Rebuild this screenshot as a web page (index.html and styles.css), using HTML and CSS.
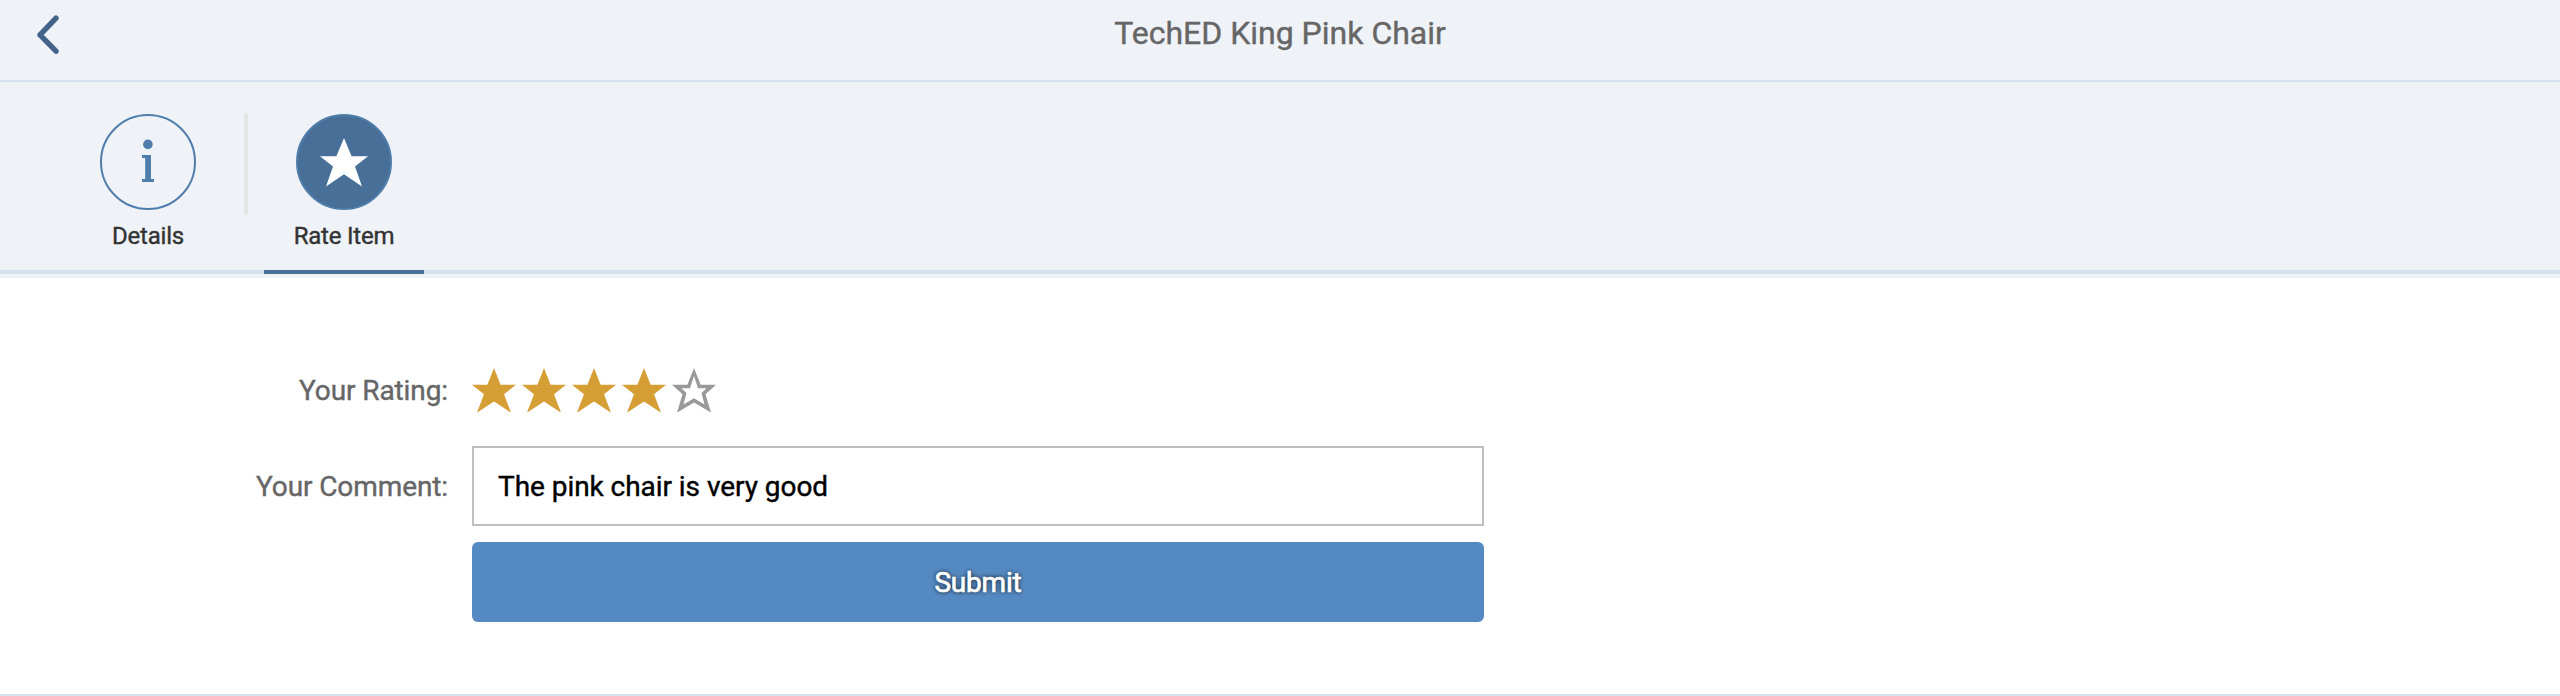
FILE: index.html
```
<!DOCTYPE html>
<html lang="en">
<head>
<meta charset="utf-8">
<title>TechED King Pink Chair</title>
<link rel="stylesheet" href="styles.css">
</head>
<body>
<header class="header">
  <button class="back" aria-label="Back">
    <svg width="24" height="40" viewBox="0 0 24 40"><path d="M20 3.2 4 19.8 20 36.2"/></svg>
  </button>
  <h1 class="title">TechED King Pink Chair</h1>
</header>
<nav class="tabs">
  <a class="tab">
    <span class="tab-icon">
      <svg width="92" height="92" viewBox="2 2 92 92"><circle cx="47.9" cy="30.4" r="4.8"/><path d="M42 41h9v24h3v3H42v-3h3.2V44H42z"/></svg>
    </span>
    <span class="tab-label">Details</span>
  </a>
  <span class="separator"></span>
  <a class="tab selected">
    <span class="tab-icon">
      <svg width="48" height="49" viewBox="0 0 48 49"><path d="M24 0 31.6 18.3H48L35 28.6 42 48.5 24 36.3 6 48.5 13 28.6 0 18.3H16.4z"/></svg>
    </span>
    <span class="tab-label">Rate Item</span>
  </a>
</nav>
<main class="form">
  <span class="label">Your Rating:</span>
  <div class="stars">
    <svg class="star" viewBox="0 0 44 44"><path d="M22 0 28.6 16.7H44L32 26.2 38.8 44H38L22 33.5 6 44H5.2L12 26.2 0 16.7H15.4z"/></svg>
    <svg class="star" viewBox="0 0 44 44"><path d="M22 0 28.6 16.7H44L32 26.2 38.8 44H38L22 33.5 6 44H5.2L12 26.2 0 16.7H15.4z"/></svg>
    <svg class="star" viewBox="0 0 44 44"><path d="M22 0 28.6 16.7H44L32 26.2 38.8 44H38L22 33.5 6 44H5.2L12 26.2 0 16.7H15.4z"/></svg>
    <svg class="star" viewBox="0 0 44 44"><path d="M22 0 28.6 16.7H44L32 26.2 38.8 44H38L22 33.5 6 44H5.2L12 26.2 0 16.7H15.4z"/></svg>
    <svg class="star empty" viewBox="0 0 44 44"><path fill-rule="evenodd" d="M22 0 28.6 16.7H44L33.500 26.200 38.800 44H38L22 34.500 6 44H5.200L10.500 26.200 0 16.700H15.400zM22 8 18 20.200H9.500L14.500 25 11.500 36.500 22 30.200 32.500 36.500 29.500 25 34.500 20.200H26z"/></svg>
  </div>
  <span class="label">Your Comment:</span>
  <div class="input">The pink chair is very good</div>
  <button class="submit">Submit</button>
</main>
</body>
</html>
```
FILE: styles.css
```
* { box-sizing: border-box; }
body { margin: 0; height: 696px; display: flex; flex-direction: column; background: #fff; font-family: Roboto, sans-serif; -webkit-text-stroke: 0.4px; }
.header { height: 82px; display: grid; grid-template-columns: 100px 1fr 100px; background: #eff3f8; border-bottom: 2px solid #d6e1ef; }
.back { border: 0; background: none; padding: 15px 0 0 36px; text-align: left; line-height: 0; align-self: start; }
.back path { fill: none; stroke: #446389; stroke-width: 5.4; stroke-linecap: round; stroke-linejoin: round; }
.title { margin: 0; padding-top: 14px; font-size: 32px; line-height: 38px; font-weight: 400; color: #666; text-align: center; }
.tabs { height: 196px; display: flex; padding: 32px 0 0 68px; background: #eff3f8; border-bottom: 4px solid #eff3f8; box-shadow: inset 0 -4px #d6e1ef; }
.tab { width: 160px; height: 160px; display: flex; flex-direction: column; align-items: center; }
.tab-icon { width: 96px; height: 96px; flex: none; border: 2px solid #4f7dac; border-radius: 50%; display: flex; align-items: center; justify-content: center; }
.tab-icon svg { fill: #4f7dac; }
.selected { border-bottom: 4px solid #486f98; }
.selected .tab-icon { background: #486f98; }
.selected .tab-icon svg { fill: #fff; }
.tab-label { margin-top: 11px; font-size: 24px; line-height: 30px; letter-spacing: -0.2px; color: #333; white-space: nowrap; }
.separator { width: 4px; height: 100px; margin: 0 16px; background: #e5e5e5; }
.form { flex: 1; display: grid; grid-template-columns: 448px 1012px; grid-template-rows: 80px 80px 80px; gap: 16px 24px; padding-top: 72px; align-items: center; border-bottom: 2px solid #d6e3ef; }
.label { text-align: right; font-size: 28px; letter-spacing: -0.1px; color: #666; }
.stars { display: flex; gap: 6px; }
.star { width: 44px; height: 44px; fill: #d69f36; }
.star.empty { fill: #999; }
.input { height: 80px; border: 2px solid #bfbfbf; display: flex; align-items: center; padding-left: 24px; font-size: 28px; letter-spacing: -0.05px; color: #000; }
.submit { grid-column: 2; height: 80px; border: 0; border-radius: 6px; background: #5589c1; color: #fff; font: 28px Roboto, sans-serif; letter-spacing: -0.2px; -webkit-text-stroke: 0.7px; text-shadow: 0 0 4px #000; }
```
